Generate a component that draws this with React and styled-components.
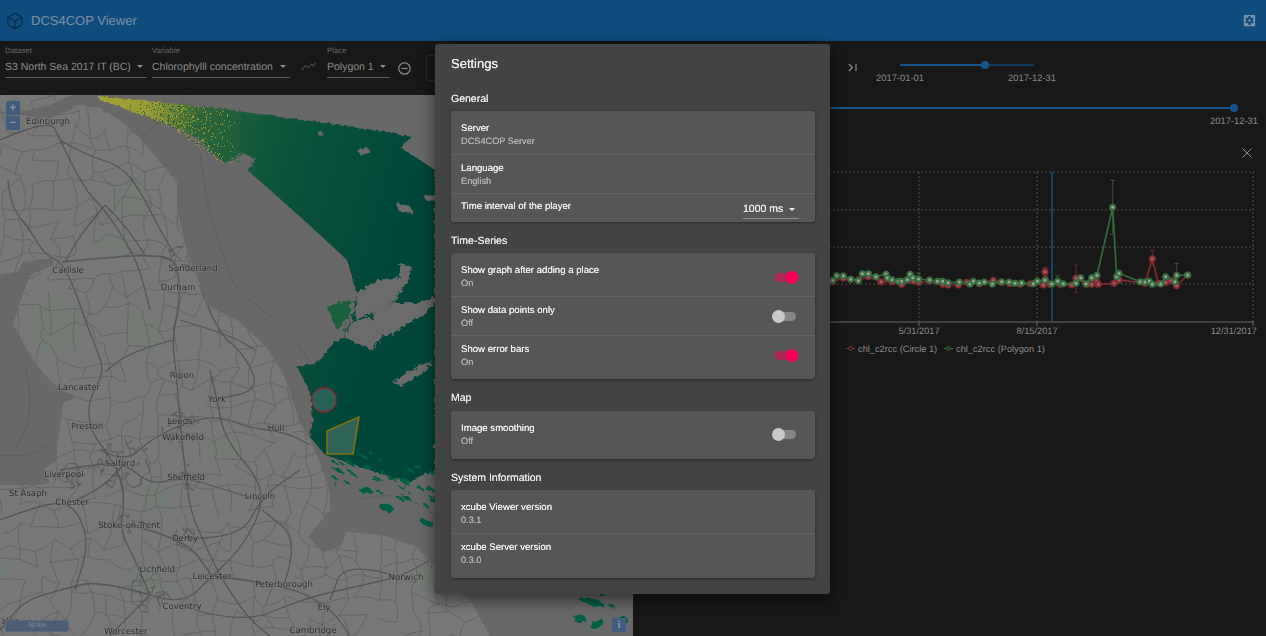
import React from "react";
import styled, { createGlobalStyle } from "styled-components";

const GlobalStyle = createGlobalStyle`
  html, body, #root {
    margin: 0;
    height: 100%;
  }
  body {
    background: #181818;
    overflow: hidden;
    font-family: "Liberation Sans", Arial, sans-serif;
    text-rendering: geometricPrecision;
  }
`;

const Page = styled.div`
  position: relative;
  display: flex;
  flex-direction: column;
  width: 1266px;
  height: 636px;
  overflow: hidden;
`;

const AppBar = styled.header`
  display: flex;
  align-items: center;
  justify-content: space-between;
  height: 41px;
  padding: 0 9px 0 6px;
  box-sizing: border-box;
  background: #104d7e;
`;

const Brand = styled.div`
  display: flex;
  align-items: center;
  gap: 7px;
  font-size: 13px;
  color: #7f909f;
`;

const ControlBar = styled.div`
  display: flex;
  align-items: flex-start;
  height: 54px;
  padding-left: 5px;
  box-sizing: border-box;
  background: #181818;
`;

const Field = styled.div`
  width: ${(p) => p.$width}px;
  margin-right: ${(p) => p.$gap || 0}px;
  padding-top: 5px;
`;

const FieldLabel = styled.div`
  font-size: 7.8px;
  line-height: 10px;
  color: #686868;
`;

const SelectValue = styled.div`
  display: flex;
  align-items: center;
  justify-content: space-between;
  height: 21px;
  padding-right: 4px;
  border-bottom: 1px solid #5d5d5d;
  font-size: 10.5px;
  color: #8e8e8e;
`;

const Caret = styled.span`
  width: 0;
  height: 0;
  border-left: 3px solid transparent;
  border-right: 3px solid transparent;
  border-top: 3px solid ${(p) => p.$color || "#8e8e8e"};
`;

const BarIcon = styled.div`
  display: flex;
  width: ${(p) => p.$width}px;
  justify-content: center;
  margin-top: ${(p) => p.$top}px;
`;

const HiddenButton = styled.div`
  width: 20px;
  height: 26px;
  margin: 14px 0 0 8px;
  border: 1px solid #2c2c2c;
  border-radius: 3px;
  box-sizing: border-box;
`;

const PlayerGroup = styled.div`
  display: flex;
  margin-left: 402px;
  padding-top: 18px;
`;

const SkipIcon = styled.svg`
  margin-top: 4px;
`;

const MiniSlider = styled.div`
  position: relative;
  width: 134px;
  height: 2px;
  margin: 5px 0 0 43px;
  background: #123a5c;

  &::before {
    content: "";
    position: absolute;
    left: 0;
    top: 0;
    width: 85px;
    height: 2px;
    background: #15548a;
  }
`;

const SliderThumb = styled.span`
  position: absolute;
  left: ${(p) => p.$at}px;
  top: 50%;
  width: ${(p) => p.$size}px;
  height: ${(p) => p.$size}px;
  margin: ${(p) => -p.$size / 2}px 0 0 ${(p) => -p.$size / 2}px;
  border-radius: 50%;
  background: #15548a;
`;

const DateLabel = styled.span`
  position: absolute;
  top: 8px;
  left: ${(p) => p.$at}px;
  transform: translateX(-50%);
  font-size: 9.4px;
  line-height: 12px;
  color: #8a8a8a;
  white-space: nowrap;
`;

const Main = styled.div`
  display: flex;
  flex: 1;
  min-height: 0;
`;

const MapPane = styled.div`
  position: relative;
  width: 633px;
  flex: none;
  background: #686868;
  overflow: hidden;

  svg {
    display: block;
    filter: blur(0.35px);
  }
`;

const ZoomButtons = styled.div`
  position: absolute;
  left: 6px;
  top: 6px;
  display: flex;
  flex-direction: column;
  gap: 1px;
`;

const MapButton = styled.div`
  display: flex;
  align-items: center;
  justify-content: center;
  width: 14px;
  height: 14px;
  background: #425c7f;
  color: #8d97a5;
  font-size: 11px;
  font-weight: 700;
`;

const ScaleBar = styled.div`
  position: absolute;
  left: 5px;
  bottom: 4px;
  width: 64px;
  height: 12px;
  box-sizing: border-box;
  border: 1px solid #5b6980;
  border-radius: 2px;
  background: #4e5d74;
  color: #8b93a1;
  font-size: 6.5px;
  line-height: 10px;
  text-align: center;
`;

const InfoButton = styled(MapButton)`
  position: absolute;
  left: 612px;
  bottom: 4px;
  font-family: "Liberation Serif", serif;
`;

const ChartPane = styled.div`
  flex: 1;
  display: flex;
  flex-direction: column;
  background: #181818;
`;

const RangeSlider = styled.div`
  position: relative;
  height: 2px;
  margin: 12px 32px 0 0;
  background: #15548a;
`;

const RangeSpacer = styled.div`
  height: 39px;
`;

const CloseRow = styled.div`
  display: flex;
  justify-content: flex-end;
  height: 17px;
  padding-right: 14px;
`;

const ChartBox = styled.div`
  svg {
    display: block;
  }
`;

const ChartText = styled.text`
  font-size: 9.25px;
  fill: #8c8c8c;
`;

const Dialog = styled.section`
  position: absolute;
  left: 435px;
  top: 44px;
  width: 395px;
  height: 550px;
  padding: 0 15px 0 16px;
  box-sizing: border-box;
  border-radius: 3px;
  background: #434343;
  box-shadow: 0 8px 14px rgba(0, 0, 0, 0.35), 0 0 18px rgba(0, 0, 0, 0.3);
  text-shadow: 0 0 0.3px currentColor;
`;

const DialogTitle = styled.h2`
  margin: 0;
  padding-top: 12px;
  font-size: 13px;
  line-height: 16px;
  font-weight: 400;
  color: #f2f2f2;
`;

const SectionTitle = styled.h3`
  display: flex;
  align-items: center;
  height: ${(p) => p.$height}px;
  margin: 0;
  padding-top: ${(p) => p.$top}px;
  box-sizing: border-box;
  font-size: 10.5px;
  font-weight: 400;
  color: #ececec;
`;

const Card = styled.div`
  border-radius: 3px;
  background: #565656;
  box-shadow: 0 1px 3px rgba(0, 0, 0, 0.4);
  overflow: hidden;
`;

const Row = styled.div`
  display: flex;
  justify-content: space-between;
  height: ${(p) => p.$height}px;
  padding: ${(p) => p.$top ?? 11}px 16px 0 10px;
  box-sizing: border-box;
  border-bottom: ${(p) => (p.$last ? "none" : "1px solid #636363")};
`;

const RowLabel = styled.div`
  margin-top: 1px;
  font-size: 9.6px;
  line-height: 12px;
  color: #f0f0f0;
`;

const RowValue = styled.div`
  font-size: 9.2px;
  line-height: 12px;
  color: #b3b3b3;
`;

const IntervalSelect = styled.div`
  display: flex;
  align-items: center;
  justify-content: space-between;
  width: 56px;
  height: 19px;
  padding-right: 4px;
  box-sizing: border-box;
  border-bottom: 1px solid #8f8f8f;
  font-size: 10.5px;
  color: #f0f0f0;
`;

const SwitchTrack = styled.div`
  position: relative;
  width: 22px;
  height: 9px;
  margin: ${(p) => p.$top}px 3px 0 0;
  border-radius: 5px;
  background: ${(p) => (p.$on ? "#a82a54" : "#868686")};
`;

const SwitchThumb = styled.span`
  position: absolute;
  top: -2px;
  left: ${(p) => (p.$on ? "10.5px" : "-2.5px")};
  width: 13px;
  height: 13px;
  border-radius: 50%;
  background: ${(p) => (p.$on ? "#f50057" : "#c9c9c9")};
`;

const MapLabel = styled.text`
  font-family: "DejaVu Sans", sans-serif;
  font-size: 8.6px;
  fill: #2f2f2f;
  text-anchor: middle;
  paint-order: stroke;
  stroke: rgba(128, 128, 128, 0.7);
  stroke-width: 1.5px;
`;

// seeded so the speckle of the map stays the same on each load
function makeRandom(seed) {
  let s = seed;
  return () => {
    s = (s * 16807) % 2147483647;
    return (s - 1) / 2147483646;
  };
}

const LAND =
  "M0,113 L30,116 L50,118 L70,110 L77,105 L100,108 L117,118 L140,138 L160,162 L177,182 L177,208 L187,252 L200,285 L207,305 L240,322 L267,348 L283,373 L290,393 L300,423 L310,440 L320,463 L330,493 L330,510 L308,537 L323,552 L340,547 L347,532 L383,535 L417,547 L440,573 L470,600 L490,636 L0,636 L0,485 L40,485 L50,483 L43,470 L57,460 L57,447 L60,427 L63,403 L77,397 L60,390 L43,373 L30,355 L13,325 L20,302 L30,275 L53,265 L53,258 L23,262 L17,272 L0,275 Z";

const FIFE = "M0,95 L72,95 L50,105 L20,112 L0,112 Z";

const GREEN_SEA =
  "M98,96 L217,108 L317,122 L387,132 L412,137 L400,147 L435,170 L435,470 L407,482 L360,467 L325,455 L310,437 L313,420 L310,393 L297,367 L313,365 L330,347 L343,335 L352,320 L357,293 L347,260 L307,223 L270,190 L247,170 L257,160 L243,153 L223,162 L200,140 L167,123 L100,100 Z";

const CLOUDS = [
  "M357,293 L377,280 L400,277 L400,263 L412,267 L408,280 L393,303 L373,313 L355,320 Z",
  "M352,322 L370,318 L387,330 L372,350 L343,337 Z",
  "M373,313 L393,303 L417,303 L435,298 L435,303 L420,317 L387,337 L372,330 Z",
  "M393,383 L410,370 L433,360 L425,372 L400,386 Z",
  "M358,150 L368,148 L370,153 L360,155 Z",
  "M396,203 L410,206 L414,213 L400,212 Z",
  "M424,195 L435,196 L435,201 L426,200 Z",
  "M318,132 L325,133 L323,136 L317,135 Z",
];

const WEST_PATCH = "M327,307 L350,300 L350,317 L337,330 Z";

const BIG_BLOBS = [
  [367, 490, 6, 3, 25], [387, 508, 7, 4, 15], [427, 523, 7, 3, 20], [404, 480, 6, 2, 25],
  [592, 602, 13, 3.5, 15], [580, 619, 6, 4, 0], [597, 624, 7, 4, -30], [623, 621, 5, 5, 0],
  [612, 606, 4, 1.5, 20], [603, 595, 3, 1.5, 0],
];

const FORESTS = [
  "M125,175 L145,180 L148,205 L128,225 L115,210 Z",
  "M105,225 L125,235 L120,255 L100,250 Z",
  "M30,305 L60,295 L85,320 L75,350 L45,355 L25,330 Z",
  "M120,310 L165,320 L160,350 L125,345 Z",
  "M145,480 L170,490 L165,520 L150,515 Z",
  "M210,440 L235,435 L240,455 L215,460 Z",
  "M130,570 L160,565 L170,590 L140,600 Z",
  "M0,560 L10,560 L8,575 L0,578 Z",
  "M410,560 L440,575 L435,595 L415,585 Z",
];

const MOTORWAYS = [
  "M0,140 L50,118 L60,140 L85,190 L105,210 L128,245 L140,270 L150,310",
  "M8,180 L10,205 L30,230 L45,255 L62,262 L75,290 L85,320 L95,345 L105,372 L88,400 L90,430 L105,450 L118,470 L125,500 L120,530 L135,560 L150,595",
  "M62,262 L100,258 L145,255 L175,258 L180,285 L178,310 L172,340 L176,370 L180,420 L185,470 L190,510 L205,545 L225,585 L250,620 L270,636",
  "M60,140 L85,155 L120,165 L140,190 L160,230 L175,255",
  "M105,205 L80,235 L65,262",
  "M105,205 L125,225 L145,255",
  "M100,450 L125,463 L150,440 L180,425 L215,415 L250,428 L285,432 L310,445",
  "M60,470 L90,465 L125,463 L150,485 L185,477 L225,490 L260,500",
  "M150,595 L182,606 L212,576 L240,550 L262,510 L260,480 L225,440 L217,400 L210,370",
  "M150,595 L125,620 L110,636",
  "M150,595 L100,580 L60,590 L25,600 L0,630",
  "M182,606 L240,625 L300,600 L340,590 L400,577 L430,560",
  "M212,576 L284,584 L330,607 L350,636",
  "M185,538 L240,540 L262,496 L300,470",
  "M129,525 L185,538 L212,576",
  "M284,584 L300,540 L262,510",
  "M400,577 L345,560 L330,600",
  "M200,285 L215,330 L245,355 L260,390 L217,399",
  "M72,502 L100,490 L125,463",
  "M0,520 L40,505 L72,502 L90,540 L75,590",
  "M180,320 L230,335 L255,350",
  "M172,340 L130,352 L105,372",
];

const SEA_ROUTES = [
  "M140,138 L165,118 L190,95",
  "M200,152 L205,200 L225,260 L235,290 L290,330 L320,380",
  "M0,455 L22,458 L50,445",
  "M358,500 L395,490 L435,515",
  "M25,365 L35,410 L15,450",
];

const CITY_WEBS = [
  [178, 258, 15], [125, 465, 28], [150, 592, 22], [180, 428, 20],
  [187, 478, 14], [72, 475, 14], [185, 538, 12], [125, 525, 12],
];

const CITIES = [
  ["Edinburgh", 48, 124], ["Carlisle", 68, 273], ["Sunderland", 193, 271],
  ["Durham", 178, 290], ["Lancaster", 79, 390], ["Ripon", 182, 378],
  ["York", 217, 402], ["Leeds", 180, 424], ["Preston", 87, 429],
  ["Hull", 276, 431], ["Wakefield", 183, 440], ["Salford", 120, 466],
  ["Liverpool", 64, 477], ["Sheffield", 186, 480], ["St Asaph", 28, 496],
  ["Chester", 72, 505], ["Lincoln", 260, 499], ["Stoke-on-Trent", 129, 528],
  ["Derby", 185, 541], ["Lichfield", 157, 572], ["Leicester", 212, 579],
  ["Peterborough", 284, 587], ["Norwich", 406, 580], ["Coventry", 182, 609],
  ["Ely", 324, 610], ["Worcester", 126, 634], ["Cambridge", 313, 633],
  ["ales", 10, 624],
];

// turns "M.. L.. L.." into a line that bends through the midpoints
function smooth(d) {
  const nums = d.match(/-?\d+(\.\d+)?/g).map(Number);
  const pts = [];
  for (let i = 0; i < nums.length; i += 2) pts.push([nums[i], nums[i + 1]]);
  let out = `M${pts[0][0]},${pts[0][1]}`;
  for (let i = 1; i < pts.length - 1; i++) {
    const mx = (pts[i][0] + pts[i + 1][0]) / 2;
    const my = (pts[i][1] + pts[i + 1][1]) / 2;
    out += ` Q${pts[i][0]},${pts[i][1]} ${mx},${my}`;
  }
  const last = pts[pts.length - 1];
  return out + ` L${last[0]},${last[1]}`;
}

function roadGrid() {
  const rand = makeRandom(4711);
  const cell = 18;
  const cols = 27;
  const rows = 31;
  const nodes = {};
  for (let i = 0; i <= cols; i++) {
    for (let j = 0; j <= rows; j++) {
      nodes[`${i},${j}`] = [i * cell + (rand() - 0.5) * 15, 95 + j * cell + (rand() - 0.5) * 15];
    }
  }
  const paths = [];
  for (let i = 0; i < cols; i++) {
    for (let j = 0; j < rows; j++) {
      const a = nodes[`${i},${j}`];
      [nodes[`${i + 1},${j}`], nodes[`${i},${j + 1}`]].forEach((b) => {
        if (rand() < 0.72) {
          const cx = (a[0] + b[0]) / 2 + (rand() - 0.5) * 10;
          const cy = (a[1] + b[1]) / 2 + (rand() - 0.5) * 10;
          paths.push(`M${a[0].toFixed(1)},${a[1].toFixed(1)} Q${cx.toFixed(1)},${cy.toFixed(1)} ${b[0].toFixed(1)},${b[1].toFixed(1)}`);
        }
      });
    }
  }
  return paths;
}

function cityWebs() {
  const rand = makeRandom(991);
  const paths = [];
  CITY_WEBS.forEach(([x, y, r]) => {
    const pts = [];
    for (let i = 0; i < r * 2; i++) {
      const a = rand() * 6.28;
      const q = Math.sqrt(rand()) * r;
      pts.push([x + Math.cos(a) * q, y + Math.sin(a) * q]);
    }
    pts.forEach((p) => {
      pts
        .filter((o) => o !== p)
        .sort((m, n) => (m[0] - p[0]) ** 2 + (m[1] - p[1]) ** 2 - (n[0] - p[0]) ** 2 - (n[1] - p[1]) ** 2)
        .slice(0, 2)
        .forEach((o) => paths.push(`M${p[0].toFixed(1)},${p[1].toFixed(1)} L${o[0].toFixed(1)},${o[1].toFixed(1)}`));
    });
  });
  return paths;
}

function speckle() {
  const rand = makeRandom(2024);
  const dots = [];
  for (let i = 0; i < 1300; i++) {
    const x = 125 + rand() * 115;
    const top = 96 + (x - 100) * 0.11;
    const bottom = x < 167 ? 100 + (x - 100) * 0.37 : x < 220 ? 125 + (x - 167) * 0.7 : 162;
    const y = top + rand() * (bottom - top);
    const yellow = (x - 125) / 115 < rand() * 1.1;
    dots.push(
      <rect key={i} x={x.toFixed(0)} y={y.toFixed(0)} width="1" height="1" fill={yellow ? "#9d9d35" : "#2a6339"} />
    );
  }
  return dots;
}

function streaks() {
  const rand = makeRandom(77);
  const out = [];
  for (let i = 0; i < 46; i++) {
    const x = 332 + rand() * 103;
    const y = 462 + (x - 335) * 0.32 + (rand() - 0.5) * 44;
    out.push(
      <ellipse
        key={i}
        cx={x.toFixed(1)}
        cy={y.toFixed(1)}
        rx={(1.5 + rand() * 4).toFixed(1)}
        ry={(0.7 + rand() * 1.1).toFixed(1)}
        transform={`rotate(25 ${x.toFixed(1)} ${y.toFixed(1)})`}
      />
    );
  }
  return out;
}

function MapDrawing() {
  return (
    <svg width="633" height="541" viewBox="0 95 633 541">
      <defs>
        <linearGradient id="chl" gradientUnits="userSpaceOnUse" x1="100" y1="100" x2="420" y2="190">
          <stop offset="0" stopColor="#a3a235" />
          <stop offset="0.15" stopColor="#989a34" />
          <stop offset="0.3" stopColor="#2f6736" />
          <stop offset="0.45" stopColor="#175b3a" />
          <stop offset="0.6" stopColor="#0b533c" />
          <stop offset="1" stopColor="#004639" />
        </linearGradient>
        <clipPath id="land">
          <path d={LAND} />
          <path d={FIFE} />
        </clipPath>
        <filter id="rough" x="-5%" y="-5%" width="110%" height="110%" colorInterpolationFilters="sRGB">
          <feTurbulence type="fractalNoise" baseFrequency="0.22" numOctaves="2" seed="5" />
          <feDisplacementMap in="SourceGraphic" scale="6" />
        </filter>
      </defs>
      <path d={LAND} fill="#777777" />
      <path d={FIFE} fill="#777777" />
      <g filter="url(#rough)">
        {FORESTS.map((d) => (
          <path key={d} d={d} fill="#6f7f71" opacity="0.4" />
        ))}
      </g>
      {SEA_ROUTES.map((d) => (
        <path key={d} d={smooth(d)} fill="none" stroke="#5d5d5d" strokeWidth="1" />
      ))}
      <g clipPath="url(#land)" fill="none">
        {roadGrid().map((d, i) => (
          <path key={i} d={d} stroke="#616161" strokeWidth="0.8" />
        ))}
        {cityWebs().map((d, i) => (
          <path key={i} d={d} stroke="#5c5c5c" strokeWidth="0.8" />
        ))}
        {MOTORWAYS.map((d) => (
          <path key={d} d={smooth(d)} stroke="#555555" strokeWidth="1.3" />
        ))}
      </g>
      <g filter="url(#rough)">
        <path d={GREEN_SEA} fill="url(#chl)" />
        <path d={WEST_PATCH} fill="#1a5f3d" />
        {CLOUDS.map((d) => (
          <path key={d} d={d} fill="#6b6b6b" />
        ))}
        <g fill="#005f45">
          {streaks()}
          {BIG_BLOBS.map(([cx, cy, rx, ry, rot]) => (
            <ellipse key={`${cx}-${cy}`} cx={cx} cy={cy} rx={rx} ry={ry} transform={`rotate(${rot} ${cx} ${cy})`} />
          ))}
        </g>
      </g>
      {speckle()}
      <circle cx="324" cy="400" r="12" fill="#2a5f55" stroke="#8d2a33" strokeWidth="1.3" />
      <path d="M327,431 L359,417 L353,454 L327,454 Z" fill="#2f6355" stroke="#80730f" strokeWidth="1.5" />
      {CITIES.map(([name, x, y]) => (
        <MapLabel key={name} x={x} y={y}>{name}</MapLabel>
      ))}
    </svg>
  );
}

const GREEN_SERIES = [
  [8, 346], [20, 332], [40, 333], [62, 343], [85, 347], [97, 326], [115, 326], [138, 335], [168, 327],
  [172, 338], [186, 344], [205, 349], [215, 349], [232, 344], [240, 328], [248, 338], [266, 342],
  [299, 345], [322, 349], [338, 349], [354, 353], [388, 351], [420, 357], [430, 349], [448, 354],
  [463, 351], [487, 357], [515, 350], [537, 351], [555, 355], [575, 354], [610, 356], [622, 349],
  [645, 345], [665, 357], [683, 349], [700, 356], [738, 355], [752, 338], [768, 356], [785, 338],
  [801, 331], [848, 127], [860, 335], [867, 325], [930, 350], [945, 351], [958, 349], [967, 358],
  [992, 357], [1007, 335], [1035, 350], [1040, 331], [1073, 330],
];

const RED_SERIES = [
  [8, 350], [40, 340], [62, 343], [85, 345], [115, 335], [153, 350], [186, 350], [215, 358], [250, 348],
  [266, 352], [299, 348], [338, 358], [354, 360], [385, 360], [410, 352], [448, 356], [490, 346],
  [515, 352], [540, 356], [570, 358], [600, 356], [640, 360], [645, 320], [660, 358], [690, 358],
  [725, 360], [738, 340], [770, 358], [785, 358], [800, 350], [805, 358], [852, 355], [867, 345],
  [945, 355], [967, 281], [985, 355], [1007, 352], [1022, 346], [1040, 362], [1073, 330],
];

const RED_ERRORS = [[645, 308, 330], [738, 300, 382], [967, 257, 300]];
const GREEN_ERRORS = [[848, 46, 208], [1040, 295, 335], [683, 333, 360], [266, 325, 352]];

// the series were read off the picture at 3x, from the corner 830,165
const px = (x) => x / 3 + 830;
const py = (y) => y / 3 + 165;

function Series({ data, errors, line, ring, fill }) {
  const points = data.map(([x, y]) => `${px(x).toFixed(1)},${py(y).toFixed(1)}`).join(" ");
  return (
    <g>
      {errors.map(([x, a, b]) => (
        <path
          key={x}
          d={`M${px(x) - 2.5},${py(a)} h5 M${px(x)},${py(a)} V${py(b)} M${px(x) - 2.5},${py(b)} h5`}
          stroke={line}
          strokeWidth="0.8"
          fill="none"
        />
      ))}
      <polyline points={points} fill="none" stroke={line} strokeWidth="1.7" />
      {data.map(([x, y], i) => (
        <circle key={i} cx={px(x)} cy={py(y)} r="2.5" fill={fill} stroke={ring} strokeWidth="2" />
      ))}
    </g>
  );
}

function Chart() {
  return (
    <svg width="633" height="195" viewBox="633 165 633 195">
      {[172, 210, 247, 284].map((y) => (
        <line key={y} x1="633" x2="1254" y1={y} y2={y} stroke="#5e5e5e" strokeWidth="0.8" strokeDasharray="2 2" />
      ))}
      {[919, 1037, 1253].map((x) => (
        <line key={x} x1={x} x2={x} y1="172" y2="322" stroke="#5e5e5e" strokeWidth="0.8" strokeDasharray="2 2" />
      ))}
      <line x1="633" x2="1254" y1="322" y2="322" stroke="#6a6a6a" />
      {[919, 1037, 1253].map((x) => (
        <line key={x} x1={x} x2={x} y1="322" y2="326" stroke="#6a6a6a" />
      ))}
      <line x1="1052" x2="1052" y1="172" y2="322" stroke="#14507f" strokeWidth="1.6" />
      <Series data={RED_SERIES} errors={RED_ERRORS} line="#7f2a30" ring="#852b31" fill="#98696b" />
      <Series data={GREEN_SERIES} errors={GREEN_ERRORS} line="#33693a" ring="#37703e" fill="#9aa39a" />
      <ChartText x="919" y="334" textAnchor="middle">5/31/2017</ChartText>
      <ChartText x="1037" y="334" textAnchor="middle">8/15/2017</ChartText>
      <ChartText x="1257" y="334" textAnchor="end">12/31/2017</ChartText>
      <path d="M846,348.5 h9" stroke="#8f2d33" />
      <circle cx="850.5" cy="348.5" r="1.8" fill="#181818" stroke="#8f2d33" />
      <ChartText x="858" y="351.5">chl_c2rcc (Circle 1)</ChartText>
      <path d="M944,348.5 h9" stroke="#3d7a44" />
      <circle cx="948.5" cy="348.5" r="1.8" fill="#181818" stroke="#3d7a44" />
      <ChartText x="956" y="351.5">chl_c2rcc (Polygon 1)</ChartText>
    </svg>
  );
}

function Toggle({ on, top }) {
  return (
    <SwitchTrack $on={on} $top={top}>
      <SwitchThumb $on={on} />
    </SwitchTrack>
  );
}

function App() {
  return (
    <Page>
      <GlobalStyle />
      <AppBar>
        <Brand>
          <svg width="18" height="18" viewBox="0 0 24 24" fill="none" stroke="#0a2b47" strokeWidth="1.6" strokeLinejoin="round">
            <path d="M12 1.5 L21.5 7 V17 L12 22.5 L2.5 17 V7 Z" />
            <path d="M2.5 7 L12 12.5 L21.5 7 M12 12.5 V22.5" />
          </svg>
          DCS4COP Viewer
        </Brand>
        <svg width="15" height="15" viewBox="0 0 24 24" fill="#7d93a6">
          <path d="M12 10c-1.1 0-2 .9-2 2s.9 2 2 2 2-.9 2-2-.9-2-2-2zm7-7H5c-1.11 0-2 .9-2 2v14c0 1.1.89 2 2 2h14c1.11 0 2-.9 2-2V5c0-1.1-.89-2-2-2zm-1.75 9c0 .23-.02.46-.05.68l1.48 1.16c.13.11.17.3.08.45l-1.4 2.42c-.09.15-.27.21-.43.15l-1.74-.7c-.36.28-.76.51-1.18.69l-.26 1.85c-.03.17-.18.3-.35.3h-2.8c-.17 0-.32-.13-.35-.29l-.26-1.85c-.43-.18-.82-.41-1.18-.69l-1.74.7c-.16.06-.34 0-.43-.15l-1.4-2.42c-.09-.15-.05-.34.08-.45l1.48-1.16c-.03-.23-.05-.46-.05-.69 0-.23.02-.46.05-.68l-1.48-1.16c-.13-.11-.17-.3-.08-.45l1.4-2.42c.09-.15.27-.21.43-.15l1.74.7c.36-.28.76-.51 1.18-.69l.26-1.85c.03-.17.18-.3.35-.3h2.8c.17 0 .32.13.35.29l.26 1.85c.43.18.82.41 1.18.69l1.74-.7c.16-.06.34 0 .43.15l1.4 2.42c.09.15.05.34-.08.45l-1.48 1.16c.03.23.05.46.05.69z" />
        </svg>
      </AppBar>

      <ControlBar>
        <Field $width={142} $gap={5}>
          <FieldLabel>Dataset</FieldLabel>
          <SelectValue>S3 North Sea 2017 IT (BC)<Caret /></SelectValue>
        </Field>
        <Field $width={138}>
          <FieldLabel>Variable</FieldLabel>
          <SelectValue>Chlorophylll concentration<Caret /></SelectValue>
        </Field>
        <BarIcon $width={37} $top={21}>
          <svg width="15" height="9" viewBox="0 0 15 9" fill="none" stroke="#474747" strokeWidth="1.2">
            <path d="M0.5 8 L4.5 3.5 L7.5 6 L10.5 2 L12 4 L14.5 1" />
          </svg>
        </BarIcon>
        <Field $width={63}>
          <FieldLabel>Place</FieldLabel>
          <SelectValue>Polygon 1<Caret /></SelectValue>
        </Field>
        <BarIcon $width={28} $top={21}>
          <svg width="13" height="13" viewBox="0 0 13 13" fill="none" stroke="#8a8a8a" strokeWidth="1.2">
            <circle cx="6.5" cy="6.5" r="5.7" />
            <path d="M3.3 6.5 H9.7" />
          </svg>
        </BarIcon>
        <HiddenButton />
        <PlayerGroup>
          <SkipIcon width="9" height="9" viewBox="0 0 9 9" fill="none" stroke="#8d8d8d" strokeWidth="1.2">
            <path d="M0.8 1 L4.5 4.5 L0.8 8 M8 1 V8" />
          </SkipIcon>
          <MiniSlider>
            <SliderThumb $at={85} $size={8} />
            <DateLabel $at={0}>2017-01-01</DateLabel>
            <DateLabel $at={132}>2017-12-31</DateLabel>
          </MiniSlider>
        </PlayerGroup>
      </ControlBar>

      <Main>
        <MapPane>
          <MapDrawing />
          <ZoomButtons>
            <MapButton>+</MapButton>
            <MapButton>−</MapButton>
          </ZoomButtons>
          <ScaleBar>50 km</ScaleBar>
          <InfoButton>i</InfoButton>
        </MapPane>
        <ChartPane>
          <RangeSlider>
            <SliderThumb $at={601} $size={8} />
            <DateLabel $at={601}>2017-12-31</DateLabel>
          </RangeSlider>
          <RangeSpacer />
          <CloseRow>
            <svg width="10" height="10" viewBox="0 0 10 10" stroke="#8d8d8d" strokeWidth="1">
              <path d="M0.5 0.5 L9.5 9.5 M9.5 0.5 L0.5 9.5" />
            </svg>
          </CloseRow>
          <ChartBox>
            <Chart />
          </ChartBox>
        </ChartPane>
      </Main>

      <Dialog>
        <DialogTitle>Settings</DialogTitle>
        <SectionTitle $height={39} $top={15}>General</SectionTitle>
        <Card>
          <Row $height={44}>
            <div>
              <RowLabel>Server</RowLabel>
              <RowValue>DCS4COP Server</RowValue>
            </div>
          </Row>
          <Row $height={39} $top={7}>
            <div>
              <RowLabel>Language</RowLabel>
              <RowValue>English</RowValue>
            </div>
          </Row>
          <Row $height={28} $top={6} $last>
            <RowLabel>Time interval of the player</RowLabel>
            <IntervalSelect>1000 ms<Caret $color="#f0f0f0" /></IntervalSelect>
          </Row>
        </Card>

        <SectionTitle $height={31} $top={7}>Time-Series</SectionTitle>
        <Card>
          <Row $height={44}>
            <div>
              <RowLabel>Show graph after adding a place</RowLabel>
              <RowValue>On</RowValue>
            </div>
            <Toggle on top={9} />
          </Row>
          <Row $height={39} $top={7}>
            <div>
              <RowLabel>Show data points only</RowLabel>
              <RowValue>Off</RowValue>
            </div>
            <Toggle top={8} />
          </Row>
          <Row $height={43} $top={7} $last>
            <div>
              <RowLabel>Show error bars</RowLabel>
              <RowValue>On</RowValue>
            </div>
            <Toggle on top={8} />
          </Row>
        </Card>

        <SectionTitle $height={32} $top={5}>Map</SectionTitle>
        <Card>
          <Row $height={48} $last>
            <div>
              <RowLabel>Image smoothing</RowLabel>
              <RowValue>Off</RowValue>
            </div>
            <Toggle top={8} />
          </Row>
        </Card>

        <SectionTitle $height={31} $top={7}>System Information</SectionTitle>
        <Card>
          <Row $height={44}>
            <div>
              <RowLabel>xcube Viewer version</RowLabel>
              <RowValue>0.3.1</RowValue>
            </div>
          </Row>
          <Row $height={44} $top={7} $last>
            <div>
              <RowLabel>xcube Server version</RowLabel>
              <RowValue>0.3.0</RowValue>
            </div>
          </Row>
        </Card>
      </Dialog>
    </Page>
  );
}

export default App;
